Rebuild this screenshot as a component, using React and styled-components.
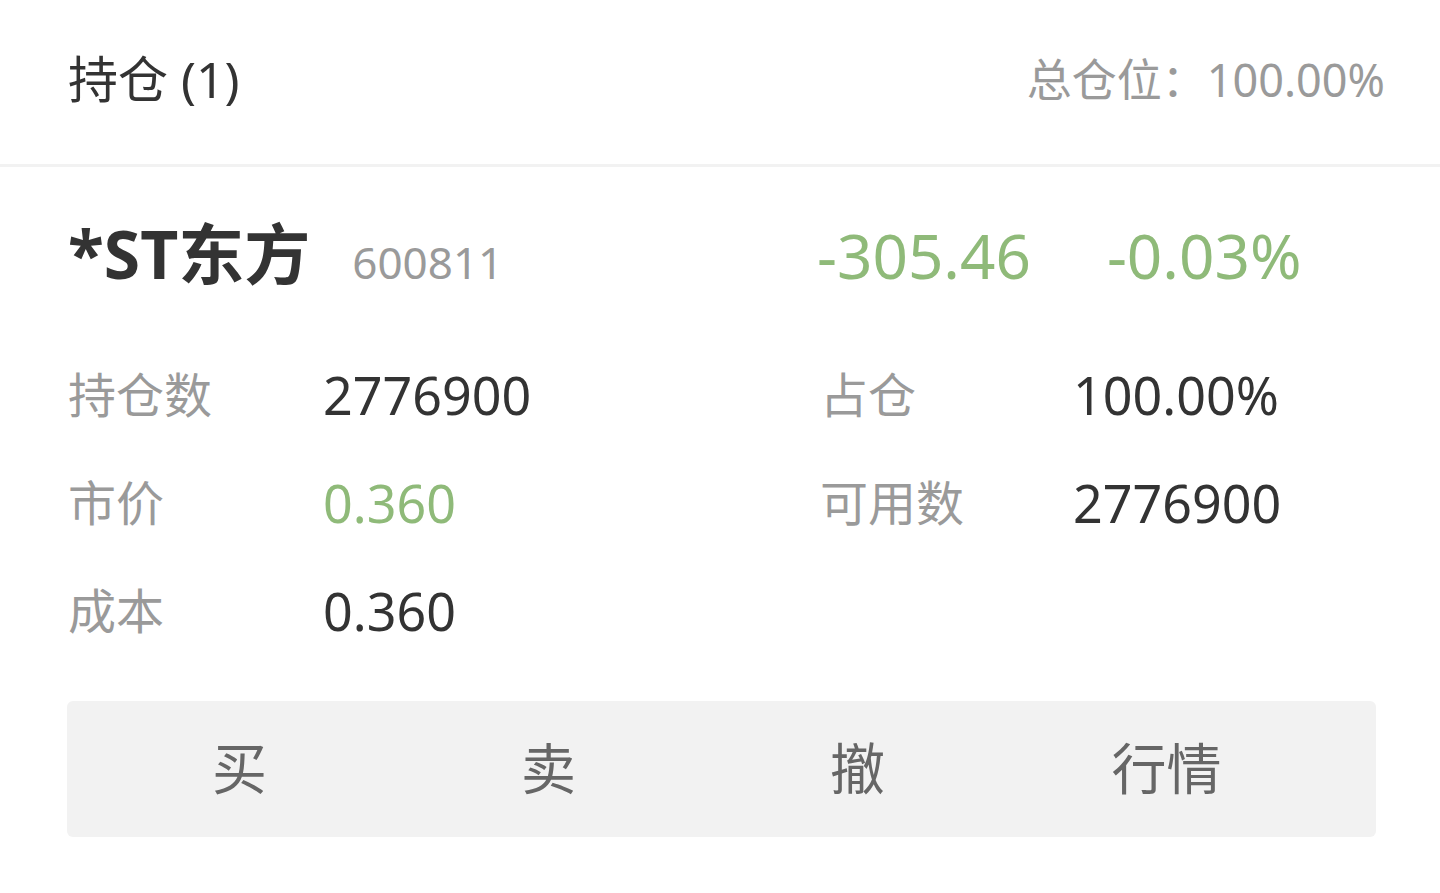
import styled, { createGlobalStyle } from "styled-components";

const GlobalStyle = createGlobalStyle`
  html, body {
    margin: 0;
    padding: 0;
    background: #ffffff;
  }
  body {
    font-family: "Noto Sans", "Noto Sans CJK SC", sans-serif;
  }
`;

const Page = styled.div`
  width: 1440px;
  min-height: 893px;
  background: #ffffff;
`;

const Header = styled.header`
  display: flex;
  align-items: center;
  justify-content: space-between;
  height: 167px;
  padding: 0 55px 0 68px;
  border-bottom: 3px solid #f2f2f2;
  box-sizing: border-box;
`;

const Title = styled.h1`
  margin: -6px 0 0;
  font-size: 50px;
  font-weight: 400;
  color: #333333;
  line-height: 1;
`;

const Total = styled.span`
  font-size: 45px;
  color: #9a9a9a;
  line-height: 1;
  margin-top: -6px;
`;

const Card = styled.section`
  padding: 0 64px 0 68px;
`;

const StockRow = styled.div`
  display: flex;
  align-items: baseline;
  height: 174px;
  padding-top: 47px;
  box-sizing: border-box;
`;

const NameBlock = styled.div`
  flex: 0 0 749px;
  display: flex;
  align-items: baseline;
  gap: 42px;
`;

const Name = styled.span`
  font-size: 66px;
  font-weight: 700;
  color: #333333;
  line-height: 1.2;
`;

const Code = styled.span`
  font-size: 44px;
  color: #9a9a9a;
`;

const Changes = styled.div`
  display: flex;
  align-items: baseline;
  gap: 76px;
`;

const Change = styled.span`
  font-size: 62px;
  color: #8fba79;
  line-height: 1.2;
`;

const InfoGrid = styled.div`
  display: grid;
  grid-template-columns: 752px 1fr;
  grid-auto-rows: 108px;
`;

const InfoCell = styled.div`
  display: flex;
  align-items: center;
`;

const Label = styled.span`
  flex: 0 0 ${(p) => p.$width || 255}px;
  font-size: 48px;
  color: #9a9a9a;
  line-height: 1;
`;

const Value = styled.span`
  font-size: 52px;
  color: ${(p) => (p.$green ? "#8fba79" : "#333333")};
  line-height: 1;
`;

const ActionBar = styled.div`
  display: grid;
  grid-template-columns: repeat(4, 309px);
  height: 136px;
  margin-top: 36px;
  margin-left: -1px;
  padding-left: 18px;
  background: #f2f2f2;
  border-radius: 6px;
`;

const Action = styled.button`
  border: none;
  background: transparent;
  font-family: "Noto Sans CJK SC", sans-serif;
  font-size: 55px;
  color: #666666;
  cursor: pointer;
  padding: 0 0 8px;
  line-height: 1;
`;

const info = [
  { label: "持仓数", value: "2776900" },
  { label: "占仓", value: "100.00%", width: 253 },
  { label: "市价", value: "0.360", green: true },
  { label: "可用数", value: "2776900", width: 253 },
  { label: "成本", value: "0.360" },
];

const actions = ["买", "卖", "撤", "行情"];

export default function App() {
  return (
    <Page>
      <GlobalStyle />
      <Header>
        <Title>持仓 (1)</Title>
        <Total>总仓位：100.00%</Total>
      </Header>
      <Card>
        <StockRow>
          <NameBlock>
            <Name>*ST东方</Name>
            <Code>600811</Code>
          </NameBlock>
          <Changes>
            <Change>-305.46</Change>
            <Change>-0.03%</Change>
          </Changes>
        </StockRow>
        <InfoGrid>
          {info.map((item) => (
            <InfoCell key={item.label}>
              <Label $width={item.width}>{item.label}</Label>
              <Value $green={item.green}>{item.value}</Value>
            </InfoCell>
          ))}
        </InfoGrid>
        <ActionBar>
          {actions.map((a) => (
            <Action key={a}>{a}</Action>
          ))}
        </ActionBar>
      </Card>
    </Page>
  );
}
